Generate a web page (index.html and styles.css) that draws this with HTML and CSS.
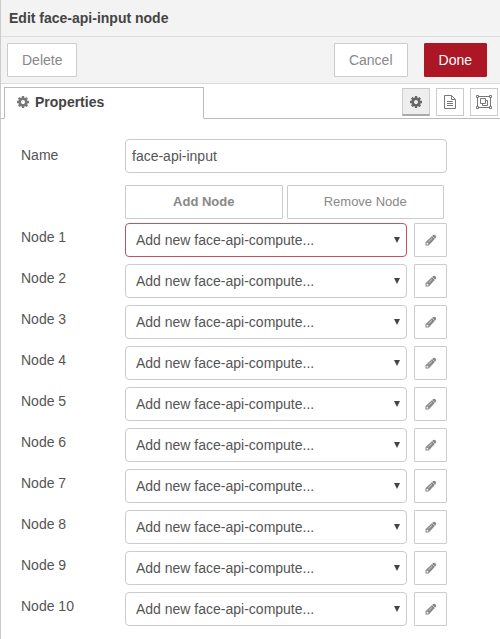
FILE: index.html
```html
<!DOCTYPE html>
<html lang="en">
<head>
<meta charset="utf-8">
<title>Edit face-api-input node</title>
<link rel="stylesheet" href="styles.css">
</head>
<body>
<svg class="symbols" aria-hidden="true">
  <symbol id="cog" viewBox="0 128 1536 1536"><path d="M1024 896q0-106-75-181t-181-75-181 75-75 181 75 181 181 75 181-75 75-181zm512-109v222q0 12-8 23t-20 13l-185 28q-19 54-39 91 35 50 107 138 10 12 10 25t-9 23q-27 37-99 108t-94 71q-12 0-26-9l-138-108q-44 23-91 38-16 136-29 186-7 28-36 28h-222q-14 0-24.500-8.500t-11.500-21.500l-28-184q-49-16-90-37l-141 107q-10 9-25 9-14 0-25-11-126-114-165-168-7-10-7-23 0-12 8-23 15-21 51-66.500t54-70.500q-27-50-41-99l-183-27q-13-2-21-12.500t-8-23.500v-222q0-12 8-23t19-13l186-28q14-46 39-92-40-57-107-138-10-12-10-24 0-10 9-23 26-36 98.500-107.500t94.500-71.500q13 0 26 10l138 107q44-23 91-38 16-136 29-186 7-28 36-28h222q14 0 24.500 8.500t11.500 21.500l28 184q49 16 90 37l142-107q9-9 24-9 13 0 25 10 129 119 165 170 7 8 7 22 0 12-8 23-15 21-51 66.500t-54 70.500q26 50 41 98l183 28q13 2 21 12.500t8 23.500z"/></symbol>
  <symbol id="pencil" viewBox="0 0 12 12"><path fill-rule="evenodd" d="M.5 11.500V8.200L7.900 1.300Q9.200.2 10.500 1.300 11.900 2.700 10.700 4L3.700 11.500zM1.600 8.900v1.500h1.500l.5-.5-1.500-1.500z"/><path fill="none" stroke="#fff" stroke-width=".6" d="M7.300 2.300l2.500 2.500M3.500 7.700l3.500-3.400"/></symbol>
  <symbol id="file" viewBox="0 0 12 14"><path fill="none" stroke="currentColor" d="M.5.5h7l4 4v9H.5zM7.500.5v4h4M3 6.500h6M3 8.500h6M3 10.500h6"/></symbol>
  <symbol id="group" viewBox="0 0 16 14"><path fill="none" stroke="currentColor" d="M.5.5h2v2h-2zM13.500.5h2v2h-2zM.5 11.500h2v2h-2zM13.500 11.500h2v2h-2zM3 1.500h10M3 12.500h10M1.500 3v8M14.500 3v8M4.500 3.500h5v5h-5zM9.500 5.500h2v5h-5v-2"/></symbol>
</svg>
<main class="tray">
  <h1 class="tray-title">Edit face-api-input node</h1>
  <div class="toolbar">
    <button class="button delete" type="button">Delete</button>
    <button class="button" type="button">Cancel</button>
    <button class="button primary" type="button">Done</button>
  </div>
  <div class="tabs">
    <a class="tab" href="#properties"><svg class="icon"><use href="#cog"/></svg>Properties</a>
    <div class="tab-tools">
      <button class="tool selected" type="button" aria-label="Properties"><svg class="icon"><use href="#cog"/></svg></button>
      <button class="tool" type="button" aria-label="Description"><svg class="icon file"><use href="#file"/></svg></button>
      <button class="tool" type="button" aria-label="Appearance"><svg class="icon group"><use href="#group"/></svg></button>
    </div>
  </div>
  <form class="form" id="properties">
    <div class="row name-row">
      <label for="name">Name</label>
      <input class="field" id="name" type="text" value="face-api-input">
    </div>
    <div class="node-actions">
      <button class="button strong" type="button">Add Node</button>
      <button class="button" type="button">Remove Node</button>
    </div>
    <div class="row"><label for="n1">Node 1</label><span class="picker"><select class="field invalid" id="n1"><option>Add new face-api-compute...</option></select></span><button class="button edit" type="button" aria-label="Edit node 1"><svg class="icon"><use href="#pencil"/></svg></button></div>
    <div class="row"><label for="n2">Node 2</label><span class="picker"><select class="field" id="n2"><option>Add new face-api-compute...</option></select></span><button class="button edit" type="button" aria-label="Edit node 2"><svg class="icon"><use href="#pencil"/></svg></button></div>
    <div class="row"><label for="n3">Node 3</label><span class="picker"><select class="field" id="n3"><option>Add new face-api-compute...</option></select></span><button class="button edit" type="button" aria-label="Edit node 3"><svg class="icon"><use href="#pencil"/></svg></button></div>
    <div class="row"><label for="n4">Node 4</label><span class="picker"><select class="field" id="n4"><option>Add new face-api-compute...</option></select></span><button class="button edit" type="button" aria-label="Edit node 4"><svg class="icon"><use href="#pencil"/></svg></button></div>
    <div class="row"><label for="n5">Node 5</label><span class="picker"><select class="field" id="n5"><option>Add new face-api-compute...</option></select></span><button class="button edit" type="button" aria-label="Edit node 5"><svg class="icon"><use href="#pencil"/></svg></button></div>
    <div class="row"><label for="n6">Node 6</label><span class="picker"><select class="field" id="n6"><option>Add new face-api-compute...</option></select></span><button class="button edit" type="button" aria-label="Edit node 6"><svg class="icon"><use href="#pencil"/></svg></button></div>
    <div class="row"><label for="n7">Node 7</label><span class="picker"><select class="field" id="n7"><option>Add new face-api-compute...</option></select></span><button class="button edit" type="button" aria-label="Edit node 7"><svg class="icon"><use href="#pencil"/></svg></button></div>
    <div class="row"><label for="n8">Node 8</label><span class="picker"><select class="field" id="n8"><option>Add new face-api-compute...</option></select></span><button class="button edit" type="button" aria-label="Edit node 8"><svg class="icon"><use href="#pencil"/></svg></button></div>
    <div class="row"><label for="n9">Node 9</label><span class="picker"><select class="field" id="n9"><option>Add new face-api-compute...</option></select></span><button class="button edit" type="button" aria-label="Edit node 9"><svg class="icon"><use href="#pencil"/></svg></button></div>
    <div class="row"><label for="n10">Node 10</label><span class="picker"><select class="field" id="n10"><option>Add new face-api-compute...</option></select></span><button class="button edit" type="button" aria-label="Edit node 10"><svg class="icon"><use href="#pencil"/></svg></button></div>
  </form>
</main>
</body>
</html>
```
FILE: styles.css
```css
* {
  box-sizing: border-box;
}

body {
  margin: 0;
  background: #fff;
  color: #555;
  font: 14px/20px "Liberation Sans", Arial, sans-serif;
}

.symbols {
  display: none;
}

.icon {
  width: 12px;
  height: 12px;
  fill: currentColor;
  flex: none;
}

.tray {
  min-height: 100vh;
  border-left: 1px solid #ccc;
}

.tray-title {
  margin: 0;
  padding: 8px;
  border-bottom: 1px solid #ddd;
  background: #f3f3f3;
  color: #444;
  font-size: 14px;
  line-height: 20px;
}

.toolbar {
  display: flex;
  gap: 16px;
  padding: 6px 13px 6px 6px;
  border-bottom: 1px solid #ddd;
  background: #f3f3f3;
}

.button {
  height: 34px;
  padding: 0 14px;
  border: 1px solid #ccc;
  border-radius: 1px;
  background: #fff;
  color: #888;
  font: inherit;
}

.delete {
  margin-right: auto;
}

.primary {
  border-color: #ad1625;
  background: #ad1625;
  color: #fff;
}

.tabs {
  display: flex;
  justify-content: space-between;
  height: 35px;
  padding: 3px 2px 0 3px;
  border-bottom: 1px solid #bbb;
}

.tab {
  display: flex;
  align-items: center;
  gap: 6px;
  width: 200px;
  height: 32px;
  padding: 0 12px 2px;
  border: 1px solid #bbb;
  border-bottom-color: #fff;
  background: #fff;
  color: #444;
  font-weight: bold;
  text-decoration: none;
}

.tab .icon {
  color: #777;
}

.tab-tools {
  display: flex;
  gap: 6px;
  padding-top: 1px;
}

.tool {
  display: flex;
  align-items: center;
  justify-content: center;
  width: 28px;
  height: 28px;
  padding: 0;
  border: 1px solid #ccc;
  background: #fff;
  color: #777;
}

.tool.selected {
  border-bottom: 2px solid #aaa;
  background: #eee;
  color: #666;
}

.icon.file {
  height: 14px;
}

.icon.group {
  width: 16px;
  height: 14px;
}

.form {
  display: flex;
  flex-direction: column;
  gap: 7px;
  padding: 20px 53px 14px 20px;
}

.row {
  display: flex;
}

.row label {
  width: 104px;
  padding-top: 4px;
  flex: none;
}

.name-row {
  margin-bottom: 5px;
}

.name-row label {
  padding-top: 6px;
}

.field {
  flex: 1;
  width: 100%;
  min-width: 0;
  height: 34px;
  padding: 0 6px;
  border: 1px solid #ccc;
  border-radius: 4px;
  background: #fff;
  color: #555;
  font: inherit;
}

select.field {
  padding: 0 10px;
  appearance: none;
}

.field.invalid {
  border-color: #c0545f;
}

.picker {
  position: relative;
  display: flex;
  flex: 1;
}

.picker::after {
  content: "";
  position: absolute;
  top: 14px;
  right: 7px;
  width: 6px;
  height: 6px;
  background: #444;
  clip-path: polygon(0 0, 100% 0, 50% 100%);
  pointer-events: none;
}

.edit {
  display: flex;
  align-items: center;
  justify-content: center;
  width: 33px;
  margin-left: 7px;
  padding: 0;
}

.node-actions {
  display: flex;
  gap: 4px;
  margin: 0 3px -3px 104px;
}

.node-actions .button {
  flex: 1;
  padding: 0;
  font-size: 13px;
}

.node-actions .strong {
  font-weight: bold;
}
```
